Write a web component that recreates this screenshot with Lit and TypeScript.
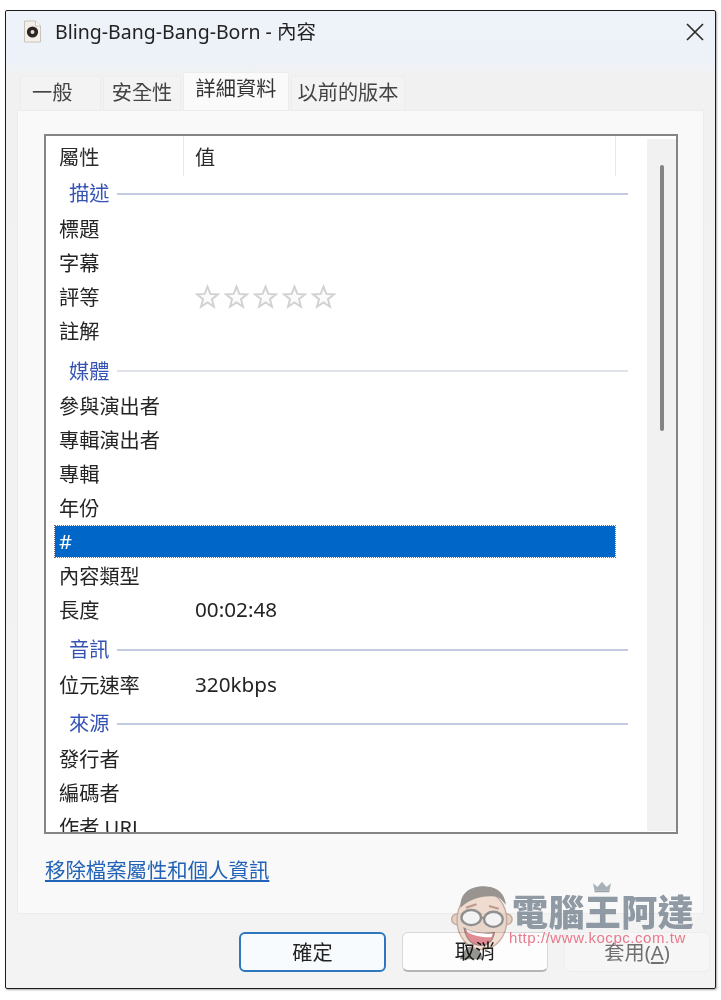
import { LitElement, html, css, svg } from "lit";
import { customElement } from "lit/decorators.js";

type Row = { k: "row" | "group" | "sel"; t: string; v?: string; stars?: boolean; cls?: string };

const rows: Row[] = [
  { k: "group", t: "描述", cls: "first strong" },
  { k: "row", t: "標題" },
  { k: "row", t: "字幕" },
  { k: "row", t: "評等", stars: true },
  { k: "row", t: "註解" },
  { k: "group", t: "媒體", cls: "second pale" },
  { k: "row", t: "參與演出者" },
  { k: "row", t: "專輯演出者" },
  { k: "row", t: "專輯" },
  { k: "row", t: "年份" },
  { k: "sel", t: "#" },
  { k: "row", t: "內容類型" },
  { k: "row", t: "長度", v: "00:02:48" },
  { k: "group", t: "音訊", cls: "third strong" },
  { k: "row", t: "位元速率", v: "320kbps" },
  { k: "group", t: "來源", cls: "fourth strong" },
  { k: "row", t: "發行者" },
  { k: "row", t: "編碼者" },
  { k: "row", t: "作者 URL" },
];

const star = svg`<svg class="star" viewBox="0 0 24 24" width="25" height="25"><path d="M12 2.6l2.7 6.9 7.3.5-5.7 4.6 1.9 7.2L12 17.8l-6.2 4 1.9-7.2L2 10l7.3-.5z" fill="#fbfbfb" stroke="#d2d2d2" stroke-width="1.9" stroke-linejoin="miter"/></svg>`;

@customElement("app-root")
export class AppRoot extends LitElement {
  static styles = css`
    :host {
      display: block;
      width: 721px;
      height: 1000px;
      background: #fff;
      font-family: "Noto Sans", "Noto Sans CJK TC", sans-serif;
      font-size: 20.2px;
      color: #262626;
      overflow: hidden;
    }
    .page {
      padding: 10px 5px 0 5px;
    }
    .win {
      box-sizing: border-box;
      position: relative;
      width: 711px;
      height: 979px;
      border: 1.5px solid #1c1c1c;
      border-radius: 2px;
      box-shadow: 1px 1px 2px #aaa;
      background: linear-gradient(180deg, #eef2f9 0, #edf2f9 48px, #f1f1f1 66px, #f3f3f3 100%);
      display: flex;
      flex-direction: column;
      filter: blur(0.35px);
    }
    .title {
      height: 41px;
      flex: none;
      display: flex;
      align-items: center;
      padding: 0 11px 0 17px;
    }
    .fileicon {
      flex: none;
      margin-right: 13px;
    }
    .title-text {
      flex: 1;
      font-size: 19.5px;
      color: #222;
      line-height: 1;
    }
    .close {
      flex: none;
    }
    .tabs {
      display: flex;
      align-items: flex-end;
      gap: 2px;
      height: 58px;
      flex: none;
      padding-left: 14px;
    }
    .tab {
      height: 34px;
      box-sizing: border-box;
      display: flex;
      align-items: center;
      justify-content: center;
      background: #f3f3f3;
      border: 1px solid #ededed;
      border-bottom: none;
      color: #444;
      line-height: 1;
      padding-bottom: 2px;
    }
    .tab.active {
      height: 38px;
      background: #fafafa;
      color: #333;
      padding-bottom: 6px;
    }
    .t1 { width: 81px; justify-content: flex-start; padding-left: 11px; }
    .t2 { width: 78px; }
    .t3 { width: 106px; }
    .t4 { width: 114px; }
    .panel {
      box-sizing: border-box;
      margin: 0 11px 0 11px;
      height: 804px;
      flex: none;
      background: #f9f9f9;
      border: 1px solid #ececec;
      padding: 23px 25px 0 26px;
    }
    .list {
      box-sizing: border-box;
      height: 700px;
      border: 2px solid #858585;
      background: #fff;
      display: flex;
      overflow: hidden;
    }
    .content {
      width: 601px;
      flex: none;
      overflow: hidden;
    }
    .head {
      height: 40px;
      display: grid;
      grid-template-columns: 138px 432px;
      box-sizing: border-box;
    }
    .hcell {
      box-sizing: border-box;
      display: flex;
      align-items: center;
      padding-left: 13px;
      border-right: 1px solid #e9e9e9;
      height: 40px;
      color: #2b2b2b;
    }
    .hcell + .hcell {
      padding-left: 11px;
    }
    .row {
      box-sizing: border-box;
      height: 34px;
      display: flex;
      align-items: center;
      padding: 0 0 2px 13px;
      flex: none;
      color: #242424;
    }
    .name {
      width: 136px;
      flex: none;
      line-height: 1;
    }
    .val {
      line-height: 1;
      font-size: 20.7px;
      margin-bottom: 1px;
    }
    .stars {
      display: flex;
      gap: 4px;
      margin-bottom: 1px;
    }
    .star {
      display: block;
    }
    .group {
      display: flex;
      align-items: center;
      padding-left: 23px;
      color: #3553b4;
      line-height: 1;
    }
    .group .line {
      height: 2px;
      width: 511px;
      margin-left: 8px;
      background: #c3cbe2;
    }
    .group.pale .line {
      background: #dfe2ea;
    }
    .first { height: 37px; padding-bottom: 2px; box-sizing: border-box; }
    .second { height: 37px; margin-top: 4px; padding-bottom: 1px; box-sizing: border-box; }
    .third { height: 38px; margin-top: 3px; padding-bottom: 1px; box-sizing: border-box; }
    .fourth { height: 38px; margin-top: 2px; padding-bottom: 1px; box-sizing: border-box; }
    .sel {
      box-sizing: border-box;
      margin: 0 0 3px 9px;
      width: 560px;
      height: 31px;
      background: #0067c8;
      outline: 1px dotted #7b6f8c;
      color: #fff;
      display: flex;
      align-items: center;
      padding: 0 0 1px 4px;
      line-height: 1;
    }
    .scroll {
      flex: 1;
      margin: 3px 0 1px;
      background: #f1f1f1;
      position: relative;
      display: flex;
      justify-content: center;
      padding-top: 26px;
    }
    .thumb {
      width: 4px;
      height: 266px;
      background: #848484;
      border-radius: 2px;
    }
    .linkwrap {
      padding: 22px 0 0 1px;
    }
    .link {
      color: #2263b8;
      text-decoration: underline;
      line-height: 28px;
      font-size: 20.4px;
    }
    .foot {
      display: flex;
      gap: 16px;
      padding: 18px 0 0 233px;
    }
    .btn {
      box-sizing: border-box;
      width: 146px;
      height: 40px;
      display: flex;
      align-items: center;
      justify-content: center;
      border-radius: 6px;
      background: #fdfdfd;
      border: 1px solid #d8d8d8;
      border-bottom: 2px solid #b5b5b5;
      color: #222;
      line-height: 1;
    }
    .btn.primary {
      width: 147px;
      border: 2px solid #2d78bd;
      background: #f8fbfd;
    }
    .btn.off {
      background: #f6f6f6;
      border: 1px solid #eeeeee;
      color: #707070;
    }
    .btn u {
      text-underline-offset: 2px;
    }
    .mark {
      position: absolute;
      left: 442px;
      top: 868px;
      width: 262px;
      height: 96px;
      pointer-events: none;
    }
    .face {
      position: absolute;
      left: 1px;
      top: 2px;
      opacity: 0.72;
      mix-blend-mode: multiply;
    }
    .crown {
      position: absolute;
      left: 141px;
      top: 2px;
      opacity: 0.85;
    }
    .brand {
      position: absolute;
      left: 64px;
      top: 9px;
      font-family: "Noto Sans CJK TC", sans-serif;
      font-weight: 900;
      font-size: 36px;
      line-height: 44px;
      color: #7d8a96;
      letter-spacing: 0.4px;
      white-space: nowrap;
      opacity: 0.85;
    }
    .url {
      position: absolute;
      left: 61px;
      top: 50px;
      font-family: "Liberation Sans", sans-serif;
      font-size: 15px;
      line-height: 18px;
      letter-spacing: 0.55px;
      color: #e8798c;
      white-space: nowrap;
    }
  `;

  private renderRow(r: Row) {
    if (r.k === "group") {
      return html`<div class="group ${r.cls}"><span>${r.t}</span><div class="line"></div></div>`;
    }
    if (r.k === "sel") {
      return html`<div class="sel">${r.t}</div>`;
    }
    return html`<div class="row">
      <div class="name">${r.t}</div>
      ${r.stars
        ? html`<div class="stars">${star}${star}${star}${star}${star}</div>`
        : r.v
        ? html`<div class="val">${r.v}</div>`
        : ""}
    </div>`;
  }

  render() {
    return html`<div class="page">
      <div class="win">
        <div class="title">
          <svg class="fileicon" width="19" height="23" viewBox="0 0 19 23">
            <path d="M1.5 1h11l5 5v16h-16z" fill="#f4efe9" stroke="#c9c3bb" />
            <circle cx="9.5" cy="12" r="5.6" fill="#2d2224" />
            <circle cx="9.5" cy="12" r="2" fill="#e9dcd4" />
            <path d="M12.5 1v5h5" fill="#fff" stroke="#c9c3bb" />
          </svg>
          <div class="title-text">Bling-Bang-Bang-Born - 內容</div>
          <svg class="close" width="18" height="18" viewBox="0 0 18 18">
            <path d="M1 1l16 16M17 1L1 17" stroke="#2b2b2b" stroke-width="1.7" fill="none" />
          </svg>
        </div>
        <div class="tabs">
          <div class="tab t1">一般</div>
          <div class="tab t2">安全性</div>
          <div class="tab t3 active">詳細資料</div>
          <div class="tab t4">以前的版本</div>
        </div>
        <div class="panel">
          <div class="list">
            <div class="content">
              <div class="head">
                <div class="hcell">屬性</div>
                <div class="hcell">值</div>
              </div>
              ${rows.map((r) => this.renderRow(r))}
            </div>
            <div class="scroll"><div class="thumb"></div></div>
          </div>
          <div class="linkwrap"><span class="link">移除檔案屬性和個人資訊</span></div>
        </div>
        <div class="foot">
          <div class="btn primary">確定</div>
          <div class="btn">取消</div>
          <div class="btn off"><span>套用(<u>A</u>)</span></div>
        </div>
        <div class="mark">
          <svg class="face" width="64" height="82" viewBox="0 0 72 92">
            <path d="M20 74c-3 6-6 9-8 14h26c-1-6-3-10-6-14z" fill="#6d6d68" />
            <circle cx="9" cy="43" r="6" fill="#eccdb9" stroke="#b98f7c" stroke-width="1.5" />
            <circle cx="65" cy="43" r="6" fill="#eccdb9" stroke="#b98f7c" stroke-width="1.5" />
            <ellipse cx="37" cy="44" rx="28" ry="33" fill="#f1d6c4" stroke="#ba9484" stroke-width="1.5" />
            <path d="M13 30C12 12 26 5 42 6c14 1 21 9 22 21-5-7-9-10-15-10-9 0-24 1-36 13z" fill="#77706b" />
            <path d="M19 30l12-4M45 28l11 3" stroke="#a8786a" stroke-width="2.4" fill="none" />
            <ellipse cx="25" cy="41" rx="11" ry="8.5" fill="#fff" stroke="#6c6c6c" stroke-width="2.6" />
            <ellipse cx="50" cy="43" rx="10.5" ry="8.5" fill="#fff" stroke="#6c6c6c" stroke-width="2.6" />
            <path d="M36 41l4 1" stroke="#6c6c6c" stroke-width="2.4" />
            <path d="M17 53c8 5 22 7 34 5-2 11-9 15-18 14-8-1-14-8-16-19z" fill="#d9606c" stroke="#7a5a55" stroke-width="1.4" />
            <path d="M19 54c8 4 20 6 30 5l-1 4c-9 1-20-2-27-5z" fill="#fff" />
          </svg>
          <svg class="crown" width="26" height="12" viewBox="0 0 28 16">
            <path d="M4 13L2 3l6 5 6-7 6 7 6-5-2 10z" fill="#9aa5ad" />
            <path d="M4 14h20" stroke="#8a949c" stroke-width="2" />
          </svg>
          <div class="brand">電腦王阿達</div>
          <div class="url">http://www.kocpc.com.tw</div>
        </div>
      </div>
    </div>`;
  }
}
